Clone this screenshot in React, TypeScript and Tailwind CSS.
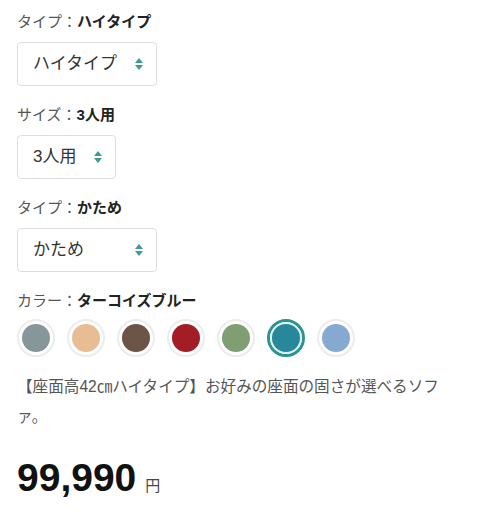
import React from 'react';

const font = { fontFamily: '"Liberation Sans", "Noto Sans CJK JP", sans-serif' };

const options = [
  { label: 'タイプ', value: 'ハイタイプ', width: 'w-[140px]' },
  { label: 'サイズ', value: '3人用', width: 'w-[99px]' },
  { label: 'タイプ', value: 'かため', width: 'w-[140px]' },
];

const colors = ['#879699', '#e8bd93', '#6c5446', '#a31d25', '#7f9e73', '#28879b', '#86a9d2'];

const Arrows: React.FC = () => (
  <svg width="10" height="16" viewBox="0 0 10 16" className="text-[#3f9a96]" fill="currentColor">
    <path d="M5 2 L9 7 H1 Z" />
    <path d="M5 14 L9 9 H1 Z" />
  </svg>
);

const App: React.FC = () => {
  return (
    <div className="w-[478px] h-[512px] bg-white px-[17px] pt-[11px] overflow-hidden" style={font}>
      {options.map((o, i) => (
        <div key={i} className="mb-[18px]">
          <div className="h-[22px] leading-[22px] text-[15px] text-[#555]">
            {o.label}：<span className="font-bold text-[#222]">{o.value}</span>
          </div>
          <div
            className={`mt-[9px] h-[44px] ${o.width} border border-[#dedede] rounded-[4px] flex items-center justify-between pl-[15px] pr-[12px] text-[17px] text-[#333]`}
          >
            <span>{o.value}</span>
            <Arrows />
          </div>
        </div>
      ))}

      <div className="h-[22px] leading-[22px] text-[15px] text-[#555]">
        カラー：<span className="font-bold text-[#222]">ターコイズブルー</span>
      </div>
      <div className="mt-[7px] flex gap-[12px]">
        {colors.map((c, i) =>
          i === 5 ? (
            <div key={c} className="w-[38px] h-[38px] rounded-full border-[3px] border-[#2e9290] flex items-center justify-center">
              <div className="w-[28px] h-[28px] rounded-full ring-2 ring-[#d9f2f0]" style={{ backgroundColor: c }} />
            </div>
          ) : (
            <div key={c} className="w-[38px] h-[38px] rounded-full border-2 border-[#ececec] flex items-center justify-center">
              <div className="w-[28px] h-[28px] rounded-full" style={{ backgroundColor: c }} />
            </div>
          )
        )}
      </div>

      <p className="mt-[15px] w-[430px] text-[15.6px] leading-[30px] text-[#555]">
        【座面高42㎝ハイタイプ】お好みの座面の固さが選べるソファ。
      </p>

      <div className="mt-[26px] flex items-baseline text-[#111]">
        <span className="text-[39px] leading-none font-bold">99,990</span>
        <span className="ml-[9px] text-[15px] text-[#444]">円</span>
      </div>
    </div>
  );
};

export default App;
